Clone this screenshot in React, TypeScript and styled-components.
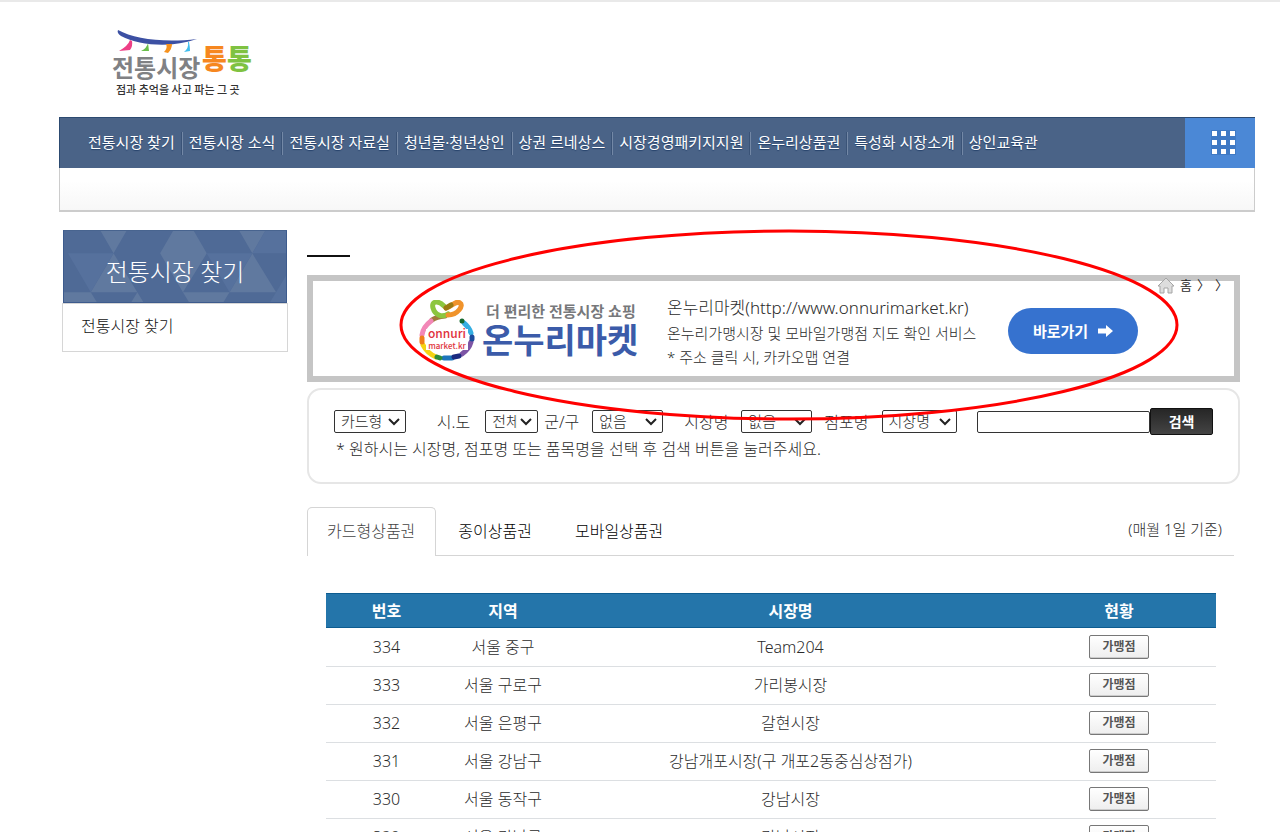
import React from "react";
import styled, { createGlobalStyle } from "styled-components";

const GlobalStyle = createGlobalStyle`
  *, *::before, *::after { box-sizing: border-box; }
  body {
    margin: 0;
    background: #fff;
    color: #2b2b2b;
    font-family: "Noto Sans", "Noto Sans CJK KR", sans-serif;
    font-size: 16px;
    font-weight: 300;
    line-height: 24px;
    border-top: 2px solid #e9e9e9;
    overflow-x: hidden;
  }
  button, input, select { font: inherit; color: inherit; }
  ul { list-style: none; margin: 0; padding: 0; }
  h1, h2, p { margin: 0; font-weight: inherit; }
  a { color: inherit; text-decoration: none; }
`;

const Page = styled.div`
  padding: 0 25px 0 59px;
  height: calc(100vh - 2px);
  min-height: 640px;
  overflow: hidden;
`;

const Header = styled.header`
  height: 115px;
  padding: 24px 0 0 51px;
`;

const SvgText = styled.text<{ $size: number; $weight?: number }>`
  font-family: "Noto Sans CJK KR", sans-serif;
  font-size: ${(p) => p.$size}px;
  font-weight: ${(p) => p.$weight ?? 400};
`;

const NavBar = styled.nav`
  display: flex;
  height: 51px;
  background: #4a6387;
  border-top: 1px solid #2c4a70;
  border-left: 1px solid #2c4a70;
`;

const Menu = styled.ul`
  flex: 1;
  display: flex;
  align-items: center;
  padding-left: 22px;
`;

const MenuItem = styled.li`
  height: 23px;
  padding: 0 6px;
  line-height: 20px;
  font-size: 15px;
  font-weight: 400;
  color: #fff;
  white-space: nowrap;
  text-shadow: 0 1px 1px #24406a;
  & + & {
    border-left: 1px solid #3a5377;
    box-shadow: inset 1px 0 0 #7388a6;
    padding-left: 7px;
  }
`;

const AllMenu = styled.button`
  width: 70px;
  border: 0;
  padding: 0 0 2px 6px;
  background: #4b88d6;
  display: flex;
  align-items: center;
  justify-content: center;
`;

const SubBar = styled.div`
  height: 44px;
  border: 1px solid #ccc;
  border-top: 0;
  border-bottom-width: 2px;
  background: linear-gradient(#fff 30%, #f7f7f7);
`;

const Columns = styled.div`
  display: flex;
  align-items: flex-start;
  gap: 19px;
  padding: 18px 15px 0 3px;
`;

const Sidebar = styled.aside`
  flex: 0 0 226px;
`;

const SideTitle = styled.h2`
  position: relative;
  height: 73px;
  margin: 0 1px;
  border: 1px solid #3d5b8d;
  border-top-color: #48648f;
  background: #4f6a96;
  color: #fff;
  font-size: 24px;
  line-height: 82px;
  text-align: center;
  overflow: hidden;
  svg { position: absolute; inset: 0; width: 100%; height: 100%; }
  span { position: relative; }
`;

const SideList = styled.ul`
  border: 1px solid #d6d6d6;
  padding: 10px 18px 13px;
  color: #111;
`;

const Main = styled.main`
  flex: 1;
  min-width: 0;
`;

const TitleRule = styled.div`
  width: 43px;
  height: 2px;
  margin: 25px 0 18px;
  background: #111;
`;

const Banner = styled.section`
  position: relative;
  height: 107px;
  border: 6px solid #c5c5c5;
  display: flex;
  align-items: center;
  padding: 4px 0 0 105px;
  white-space: nowrap;
`;

const Brand = styled.div`
  width: 166px;
  margin-left: 6px;
`;

const BrandLead = styled.p`
  padding-left: 4px;
  font-size: 15px;
  font-weight: 700;
  line-height: 18px;
  color: #77787b;
`;

const BrandName = styled.p`
  font-size: 34px;
  font-weight: 700;
  line-height: 40px;
  color: #3b5ba9;
`;

const BannerText = styled.div`
  width: 360px;
  padding: 2px 0 0 19px;
  font-size: 15px;
  line-height: 24px;
  a { font-size: 17px; line-height: 26px; }
`;

const GoButton = styled.button`
  width: 130px;
  height: 46px;
  border: 0;
  border-radius: 23px;
  background: #3672cf;
  color: #fff;
  font-size: 15px;
  font-weight: 700;
  display: flex;
  align-items: center;
  justify-content: center;
  gap: 10px;
`;

const Crumbs = styled.div`
  position: absolute;
  top: -6px;
  right: 6px;
  display: flex;
  align-items: center;
  gap: 5px;
  font-size: 13px;
  line-height: 20px;
  font-weight: 400;
`;

const Marker = styled.svg`
  position: absolute;
  left: 85px;
  top: -53px;
  z-index: 2;
  pointer-events: none;
`;

const SearchBox = styled.form`
  margin-top: 6px;
  height: 96px;
  border: 2px solid #e6e6e6;
  border-radius: 14px;
  padding: 18px 25px 0;
  p { padding: 2px 0 0 2px; }
`;

const SearchRow = styled.div`
  display: flex;
  align-items: center;
  height: 27px;
  white-space: nowrap;
`;

const Field = styled.label<{ $before?: number; $gap?: number }>`
  display: flex;
  align-items: center;
  margin-left: ${(p) => p.$before ?? 0}px;
  gap: ${(p) => p.$gap ?? 13}px;
`;

const SelectBox = styled.span<{ $w: number }>`
  position: relative;
  display: block;
  width: ${(p) => p.$w}px;
  height: 23px;
  select {
    appearance: none;
    display: block;
    width: 100%;
    height: 100%;
    border: 1px solid #333;
    border-radius: 2px;
    background: #fff;
    font-size: 15px;
    line-height: 21px;
    padding: 0 20px 0 6px;
    overflow: hidden;
    text-overflow: clip;
  }
  svg {
    position: absolute;
    right: 6px;
    top: 8px;
    pointer-events: none;
  }
`;

const Keyword = styled.input`
  flex: 0 1 174px;
  min-width: 0;
  height: 22px;
  margin-left: 20px;
  border: 1px solid #333;
  border-radius: 2px;
`;

const SearchButton = styled.button`
  width: 63px;
  height: 27px;
  border: 1px solid #111;
  border-radius: 2px;
  background: linear-gradient(#262626, #444);
  color: #fff;
  font-size: 14px;
  font-weight: 700;
  line-height: 20px;
  padding: 0;
`;

const Tabs = styled.div`
  display: flex;
  height: 49px;
  margin: 23px 6px 0 0;
  border-bottom: 1px solid #d5d5d5;
`;

const Tab = styled.button<{ $active?: boolean }>`
  height: 49px;
  padding: 0 20px 2px 19px;
  border: 1px solid ${(p) => (p.$active ? "#d5d5d5" : "transparent")};
  border-bottom: 0;
  border-radius: 5px 5px 0 0;
  background: ${(p) => (p.$active ? "#fff" : "transparent")};
  color: ${(p) => (p.$active ? "#444" : "#000")};
  & + & { padding-left: 21px; }
`;

const BaseDate = styled.p`
  margin-left: auto;
  padding: 10px 12px 0 0;
  font-size: 15px;
`;

const Table = styled.table`
  width: calc(100% - 43px);
  margin: 37px 0 0 19px;
  border-collapse: collapse;
  table-layout: fixed;
  text-align: center;
`;

const Th = styled.th<{ $w?: number }>`
  width: ${(p) => (p.$w ? `${p.$w}px` : "auto")};
  height: 35px;
  padding: 0;
  background: #2475aa;
  color: #fff;
  font-weight: 700;
  box-shadow: inset 0 1px 0 #0d5c90, inset 0 -1px 0 #0d5c90;
`;

const Td = styled.td`
  height: 38px;
  padding: 0;
  border-bottom: 1px solid #dcdfe2;
`;

const StoreButton = styled.button`
  display: block;
  width: 60px;
  height: 24px;
  margin: 0 auto;
  padding: 0;
  border: 1px solid #777;
  border-radius: 2px;
  background: linear-gradient(#fff, #eee);
  box-shadow: inset 0 -1px 0 #ccc;
  color: #555;
  font-size: 12px;
  font-weight: 700;
  line-height: 20px;
`;

const menu = [
  "전통시장 찾기", "전통시장 소식", "전통시장 자료실", "청년몰·청년상인", "상권 르네상스",
  "시장경영패키지지원", "온누리상품권", "특성화 시장소개", "상인교육관",
];

const rows = [
  [334, "서울 중구", "Team204"],
  [333, "서울 구로구", "가리봉시장"],
  [332, "서울 은평구", "갈현시장"],
  [331, "서울 강남구", "강남개포시장(구 개포2동중심상점가)"],
  [330, "서울 동작구", "강남시장"],
  [329, "서울 강남구", "강남시장"],
];

const SiteLogo = () => (
  <svg width="150" height="76" viewBox="0 0 150 76" role="img" aria-label="전통시장 통통">
    <path d="M8 4 C24 13 54 17 87 13 C62 22 30 20 11 10 C8 8 7 6 8 4Z" fill="#3c50a3" />
    <path d="M20 14 Q18 20 9 25 L20 24 Q23 20 22 15Z" fill="#ee3f86" />
    <path d="M38 17 Q37 22 31 25 L39 25 Z" fill="#6abf4b" />
    <path d="M56 18 L62 18 Q62 23 58 27 L54 26 Q58 22 56 18Z" fill="#f6921e" />
    <path d="M78 16 Q79 22 74 26 L80 25 Q80 21 79 16Z" fill="#3fbdee" />
    <SvgText x="2" y="51" $size={24} $weight={700} fill="#808184">전통시장</SvgText>
    <SvgText x="92" y="43" $size={27} $weight={900} fill="#f6871f">통</SvgText>
    <SvgText x="117" y="43" $size={27} $weight={900} fill="#7fc241">통</SvgText>
    <SvgText x="6" y="68" $size={11} $weight={500} fill="#333">점과 추억을 사고 파는 그 곳</SvgText>
  </svg>
);

const OnnuriLogo = () => (
  <svg width="58" height="62" viewBox="0 0 58 62" role="img" aria-label="onnuri market.kr">
    <g fill="none" strokeWidth="5" strokeLinecap="round">
      <path d="M53 33 Q51 27 46 23" stroke="#35aee2" />
      <path d="M44 21 L44 21" stroke="#15692f" />
      <path d="M27 16 Q18 17 14 20" stroke="#a07a3c" />
      <path d="M13 21 Q5 27 4 35" stroke="#f287b7" />
      <path d="M5 45 Q9 53 18 57" stroke="#f5d313" />
      <path d="M4 38 L4 42" stroke="#ef7d1a" />
      <path d="M44 54 Q51 49 53 42" stroke="#7d55a5" />
      <path d="M54 39 L54 37" stroke="#1c4b9c" />
      <path d="M26 58 L34 58" stroke="#1c75bc" />
      <path d="M19 57 L22 58" stroke="#2d8b3a" />
      <path d="M36 57 L41 56" stroke="#1b2a80" />
      <path d="M26 6 C20 0 13 1 15 8 C17 15 24 18 30 14" stroke="#8cc63f" />
      <path d="M30 14 C40 14 46 4 42 2 C37 -1 34 6 28 7" stroke="#f0932b" transform="translate(0 1)" />
      <path d="M28 8 L33 5" stroke="#9a7a12" />
    </g>
    <rect x="8" y="29" width="42" height="21" fill="#fff" />
    <SvgText x="29" y="38" $size={12} $weight={500} textAnchor="middle" fill="#e0323c">onnuri</SvgText>
    <SvgText x="29" y="49" $size={8} $weight={500} textAnchor="middle" fill="#e0323c">market.kr</SvgText>
  </svg>
);

const Select = ({ w, value, label }: { w: number; value: string; label?: string }) => (
  <SelectBox $w={w}>
    <select aria-label={label}><option>{value}</option></select>
    <svg width="12" height="8" viewBox="0 0 12 8" fill="none" stroke="#222" strokeWidth="2">
      <path d="M1 1L6 6L11 1" />
    </svg>
  </SelectBox>
);

export default function App() {
  return (
    <>
      <GlobalStyle />
      <Page>
        <Header><SiteLogo /></Header>
        <NavBar>
          <Menu>
            {menu.map((m) => <MenuItem key={m}><a href="#">{m}</a></MenuItem>)}
          </Menu>
          <AllMenu aria-label="전체 메뉴">
            <svg width="26" height="26" viewBox="0 0 26 26">
              <rect x="1" y="1" width="25" height="25" fill="#3f79c4" />
              {[0, 1, 2].map((r) => [0, 1, 2].map((c) => (
                <rect key={`${r}${c}`} x={2 + c * 9} y={2 + r * 9} width="5" height="5" fill="#fff" />
              )))}
            </svg>
          </AllMenu>
        </NavBar>
        <SubBar />
        <Columns>
          <Sidebar>
            <SideTitle>
              <svg viewBox="0 0 224 73" preserveAspectRatio="none">
                <path d="M37 0H63L50 23Z M110 0H131L144 23H97Z M177 0H203L190 23Z M50 23L74 63H27Z M97 23H144L120 63Z M190 23L214 63H167Z M27 63L33 73H0V63Z M74 63L80 73H68Z M120 63H167L161 73H126Z" fill="#60799f" />
                <path d="M4 23H50L27 63Z M144 23H190L167 63Z M203 0H224V23H190Z M214 63L224 46V73H208Z" fill="#56719d" />
              </svg>
              <span>전통시장 찾기</span>
            </SideTitle>
            <SideList><li><a href="#">전통시장 찾기</a></li></SideList>
          </Sidebar>
          <Main>
            <TitleRule />
            <Banner>
              <OnnuriLogo />
              <Brand>
                <BrandLead>더 편리한 전통시장 쇼핑</BrandLead>
                <BrandName>온누리마켓</BrandName>
              </Brand>
              <BannerText>
                <p><a href="#">온누리마켓(http://www.onnurimarket.kr)</a></p>
                <p>온누리가맹시장 및 모바일가맹점 지도 확인 서비스</p>
                <p>* 주소 클릭 시, 카카오맵 연결</p>
              </BannerText>
              <GoButton>
                바로가기
                <svg width="15" height="12" viewBox="0 0 15 12" fill="#fff"><path d="M0 3.5H8V0L15 6L8 12V8.5H0Z" /></svg>
              </GoButton>
              <Crumbs>
                <svg width="18" height="17" viewBox="0 0 18 17" fill="#ddd" stroke="#a5a5a5">
                  <path d="M9 1L17 9H15V16H11V11H7V16H3V9H1Z" />
                </svg>
                <span>홈</span>
                <span>〉</span>
                <span>〉</span>
              </Crumbs>
              <Marker width="782" height="194" viewBox="0 0 782 194" fill="none" stroke="#f00" strokeWidth="3">
                <ellipse cx="391" cy="97" rx="388" ry="94" />
              </Marker>
            </Banner>
            <SearchBox>
              <SearchRow>
                <Select w={72} value="카드형" label="상품권 종류" />
                <Field $before={31} $gap={15}>시.도<Select w={53} value="전체" /></Field>
                <Field $before={6}>군/구<Select w={71} value="없음" /></Field>
                <Field $before={21}>시장명<Select w={71} value="없음" /></Field>
                <Field $before={12}>점포명<Select w={75} value="시장명" /></Field>
                <Keyword type="text" aria-label="검색어" />
                <SearchButton type="button">검색</SearchButton>
              </SearchRow>
              <p>* 원하시는 시장명, 점포명 또는 품목명을 선택 후 검색 버튼을 눌러주세요.</p>
            </SearchBox>
            <Tabs>
              <Tab $active>카드형상품권</Tab>
              <Tab>종이상품권</Tab>
              <Tab>모바일상품권</Tab>
              <BaseDate>(매월 1일 기준)</BaseDate>
            </Tabs>
            <Table>
              <thead>
                <tr>
                  <Th $w={121}>번호</Th><Th $w={112}>지역</Th><Th>시장명</Th><Th $w={194}>현황</Th>
                </tr>
              </thead>
              <tbody>
                {rows.map(([no, area, name]) => (
                  <tr key={no}>
                    <Td>{no}</Td><Td>{area}</Td><Td>{name}</Td>
                    <Td><StoreButton>가맹점</StoreButton></Td>
                  </tr>
                ))}
              </tbody>
            </Table>
          </Main>
        </Columns>
      </Page>
    </>
  );
}
